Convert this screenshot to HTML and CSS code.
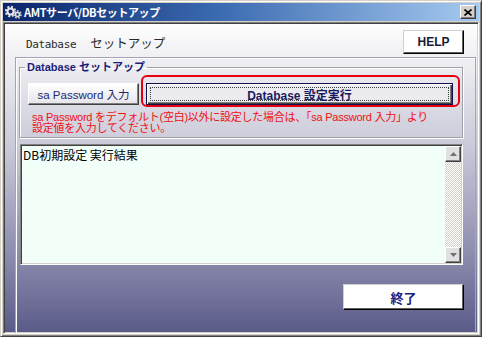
FILE: index.html
```html
<!DOCTYPE html>
<html lang="ja">
<head>
  <meta charset="UTF-8">
  <title>AMTサーバ/DBセットアップ</title>
  <link rel="stylesheet" href="styles.css">
</head>
<body>
  <div class="window">
    <!-- タイトルバー -->
    <div class="titlebar">
      <svg class="app-icon" width="17" height="14" viewBox="0 0 17 14">
        <circle cx="5.5" cy="6.5" r="4.6" fill="none" stroke="#d8d8d8" stroke-width="2.4" stroke-dasharray="2 1.6"/>
        <circle cx="5.5" cy="6.5" r="3" fill="none" stroke="#e8e8e8" stroke-width="2"/>
        <circle cx="12.5" cy="9.5" r="3.4" fill="none" stroke="#c8c8c8" stroke-width="2" stroke-dasharray="1.6 1.4"/>
        <circle cx="12.5" cy="9.5" r="2" fill="none" stroke="#e0e0e0" stroke-width="1.6"/>
      </svg>
      <span class="title">AMTサーバ/DBセットアップ</span>
      <span class="close">
        <svg width="8" height="7" viewBox="0 0 8 7"><path d="M0.5 0.5 L7.5 6.5 M7.5 0.5 L0.5 6.5" stroke="#000" stroke-width="1.6"/></svg>
      </span>
    </div>

    <div class="client">
      <div class="header">
        <h1 class="page-title"><span class="en">Database</span><span class="ja">セットアップ</span></h1>
        <button class="btn help">HELP</button>
      </div>

      <div class="panel">
        <fieldset class="group">
          <legend>Database セットアップ</legend>
          <div class="actions">
            <button class="btn pw">sa Password 入力</button>
            <div class="highlight">
              <button class="btn run"><span class="focus">Database 設定実行</span></button>
            </div>
          </div>
          <p class="note">sa Password をデフォルト(空白)以外に設定した場合は、「sa Password 入力」より<br>設定値を入力してください。</p>
        </fieldset>

        <div class="log">
          <div class="log-text">DB初期設定 実行結果</div>
          <div class="scrollbar">
            <div class="sb-btn"><svg width="7" height="4" viewBox="0 0 7 4"><path d="M3.5 0 L7 4 L0 4 Z" fill="#707070"/></svg></div>
            <div class="sb-track"></div>
            <div class="sb-btn"><svg width="7" height="4" viewBox="0 0 7 4"><path d="M0 0 L7 0 L3.5 4 Z" fill="#707070"/></svg></div>
          </div>
        </div>

        <div class="footer">
          <button class="btn exit">終了</button>
        </div>
      </div>
    </div>
  </div>
</body>
</html>
```

FILE: styles.css
```css
/* 基本リセット */
html, body {
  margin: 0;
  padding: 0;
  background: #ffffff;
  font-family: "Liberation Sans", "Noto Sans CJK JP", sans-serif;
}
*, *::before, *::after {
  box-sizing: border-box;
}

/* ウィンドウ枠 */
.window {
  width: 482px;
  height: 337px;
  display: flex;
  flex-direction: column;
  background: #d4d0c8;
  border: 1px solid;
  border-color: #d4d0c8 #404040 #404040 #d4d0c8;
  box-shadow: inset 1px 1px #ffffff, inset -1px -1px #808080;
  padding: 2px;
}

/* タイトルバー */
.titlebar {
  height: 18px;
  flex: none;
  display: flex;
  align-items: center;
  padding: 0 3px 0 2px;
  background: linear-gradient(to right, #0a246a, #3a6ab0 45%, #a6caf0);
}
.app-icon {
  flex: none;
}
.title {
  margin-left: 2px;
  color: #ffffff;
  font: bold 11px "Noto Sans CJK JP", sans-serif;
  letter-spacing: -0.4px;
}
.close {
  margin-left: auto;
  width: 16px;
  height: 14px;
  display: flex;
  align-items: center;
  justify-content: center;
  background: #d4d0c8;
  border: 1px solid;
  border-color: #ffffff #404040 #404040 #ffffff;
  box-shadow: inset -1px -1px #808080;
}

/* クライアント領域 */
.client {
  flex: 1;
  margin-top: 1px;
  display: flex;
  flex-direction: column;
  border: 1px solid;
  border-color: #808080 #ffffff #ffffff #808080;
  box-shadow: inset 1px 1px #404040, inset -1px -1px #d4d0c8;
  background: linear-gradient(#fefefe 0%, #e8e8ee 17%, #c8c8d8 41%, #8686aa 78%, #5a5a88 100%);
}

/* ヘッダー */
.header {
  margin-top: 7px;
  height: 24px;
  padding: 0 14px 0 22px;
  display: flex;
  align-items: center;
  justify-content: space-between;
}
.page-title {
  margin: 0;
  font-weight: normal;
  color: #2a2a2a;
  display: flex;
  align-items: baseline;
}
.page-title .en {
  font: 11px "DejaVu Sans Mono", monospace;
  letter-spacing: -0.35px;
}
.page-title .ja {
  margin-left: 14px;
  font: 12.5px "Noto Sans CJK JP", sans-serif;
}

/* ボタン共通 */
.btn {
  padding: 0;
  font-family: "Liberation Sans", "Noto Sans CJK JP", sans-serif;
  display: flex;
  align-items: center;
  justify-content: center;
  background: #ffffff;
  border: 1px solid;
  border-color: #d0d0d0 #000000 #000000 #d0d0d0;
  box-shadow: inset -1px -1px #606060;
}
.help {
  width: 61px;
  height: 24px;
  font-size: 12px;
  font-weight: bold;
  color: #1a1a3a;
}

/* パネル */
.panel {
  flex: 1;
  margin: 3px 2px 0 11px;
  border: 1px solid #a4a4b4;
  border-bottom: none;
  box-shadow: inset 1px 1px #ffffff;
}

/* グループボックス */
.group {
  margin: 3px 12px 0 3px;
  padding: 1px 0 3px 5px;
  min-width: 0;
  border: 1px solid #a0a0a8;
  box-shadow: inset 1px 1px #ffffff, 1px 1px #ffffff;
}
.group legend {
  padding: 0 2px;
  font-size: 11px;
  font-weight: bold;
  line-height: 13px;
  color: #1c1c78;
}
.actions {
  display: flex;
  align-items: flex-start;
}
.pw {
  margin: 8px 0 0 3px;
  width: 111px;
  height: 22px;
  font-size: 11.5px;
  color: #202a70;
  background: linear-gradient(#ffffff, #e4e4ea);
  border-color: #ffffff #404040 #404040 #ffffff;
  box-shadow: inset -1px -1px #808080;
}
.highlight {
  margin-left: 2px;
  width: 319px;
  padding: 6px 5px 0 3px;
  border: 2px solid #e8000e;
  border-radius: 6px;
}
.run {
  width: 307px;
  height: 22px;
  background: #ececf0;
  border: 1px solid #10104a;
  box-shadow: inset 1px 1px #ffffff, inset -1px -1px #404040, inset -2px -2px #808080;
}
.run .focus {
  width: calc(100% - 6px);
  height: calc(100% - 6px);
  display: flex;
  align-items: center;
  justify-content: center;
  border: 1px dotted #404040;
  font-size: 12px;
  font-weight: bold;
  color: #1a1a60;
}
.note {
  margin: 5px 0 0 7px;
  font-size: 11px;
  line-height: 11px;
  letter-spacing: -0.25px;
  color: #f01010;
  white-space: nowrap;
}

/* 実行結果 */
.log {
  margin: 6px 12px 0 4px;
  height: 121px;
  display: flex;
  border: 1px solid;
  border-color: #808080 #ffffff #ffffff #808080;
  box-shadow: inset 1px 1px #404040, inset -1px -1px #d4d0c8;
  padding: 1px;
  background: #f2fff9;
}
.log-text {
  flex: 1;
  padding: 2px 1px;
  font: 12px "Noto Sans CJK JP", sans-serif;
  line-height: 14px;
  color: #000000;
}
.scrollbar {
  width: 16px;
  display: flex;
  flex-direction: column;
}
.sb-btn {
  height: 16px;
  display: flex;
  align-items: center;
  justify-content: center;
  background: #e0e0e0;
  border: 1px solid;
  border-color: #ffffff #404040 #404040 #ffffff;
  box-shadow: inset -1px -1px #808080;
}
.sb-track {
  flex: 1;
  background: repeating-conic-gradient(#ffffff 0 25%, #d4d0c8 0 50%) 0 0 / 2px 2px;
}

/* フッター */
.footer {
  display: flex;
  justify-content: flex-end;
  margin: 19px 11px 0 0;
}
.exit {
  width: 121px;
  height: 26px;
  font-size: 13px;
  font-weight: bold;
  color: #1a2080;
}
```
